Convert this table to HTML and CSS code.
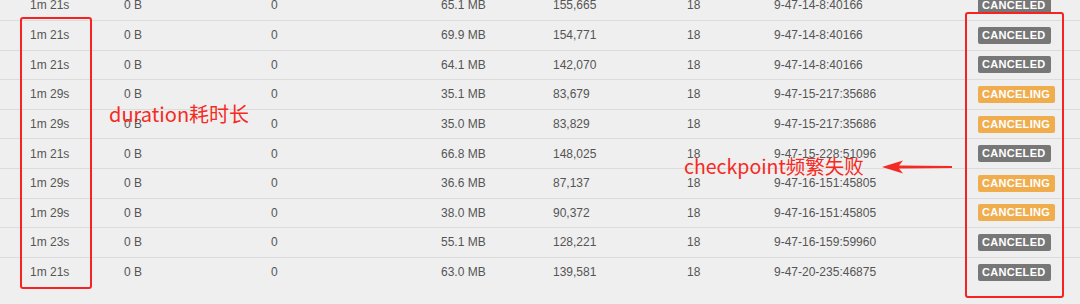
FILE: index.html
```html
<!DOCTYPE html>
<html>
<head>
<meta charset="utf-8">
<link rel="stylesheet" href="styles.css">
</head>
<body>
<div class="page">
  <div class="table">
    <div class="row first"><span>1m 21s</span><span>0 B</span><span>0</span><span>65.1 MB</span><span>155,665</span><span>18</span><span>9-47-14-8:40166</span><span><b class="badge done">CANCELED</b></span></div>
    <div class="row"><span>1m 21s</span><span>0 B</span><span>0</span><span>69.9 MB</span><span>154,771</span><span>18</span><span>9-47-14-8:40166</span><span><b class="badge done">CANCELED</b></span></div>
    <div class="row"><span>1m 21s</span><span>0 B</span><span>0</span><span>64.1 MB</span><span>142,070</span><span>18</span><span>9-47-14-8:40166</span><span><b class="badge done">CANCELED</b></span></div>
    <div class="row"><span>1m 29s</span><span>0 B</span><span>0</span><span>35.1 MB</span><span>83,679</span><span>18</span><span>9-47-15-217:35686</span><span><b class="badge busy">CANCELING</b></span></div>
    <div class="row"><span>1m 29s</span><span>0 B</span><span>0</span><span>35.0 MB</span><span>83,829</span><span>18</span><span>9-47-15-217:35686</span><span><b class="badge busy">CANCELING</b></span></div>
    <div class="row"><span>1m 21s</span><span>0 B</span><span>0</span><span>66.8 MB</span><span>148,025</span><span>18</span><span>9-47-15-228:51096</span><span><b class="badge done">CANCELED</b></span></div>
    <div class="row"><span>1m 29s</span><span>0 B</span><span>0</span><span>36.6 MB</span><span>87,137</span><span>18</span><span>9-47-16-151:45805</span><span><b class="badge busy">CANCELING</b></span></div>
    <div class="row"><span>1m 29s</span><span>0 B</span><span>0</span><span>38.0 MB</span><span>90,372</span><span>18</span><span>9-47-16-151:45805</span><span><b class="badge busy">CANCELING</b></span></div>
    <div class="row"><span>1m 23s</span><span>0 B</span><span>0</span><span>55.1 MB</span><span>128,221</span><span>18</span><span>9-47-16-159:59960</span><span><b class="badge done">CANCELED</b></span></div>
    <div class="row"><span>1m 21s</span><span>0 B</span><span>0</span><span>63.0 MB</span><span>139,581</span><span>18</span><span>9-47-20-235:46875</span><span><b class="badge done">CANCELED</b></span></div>
  </div>

  <div class="box box-left"></div>
  <div class="box box-right"></div>
  <div class="note note-duration">duration耗时长</div>
  <div class="note note-checkpoint">checkpoint频繁失败</div>
  <svg class="arrow" width="72" height="14" viewBox="0 0 72 14">
    <polygon points="0,7 21,0.5 17,5.5 70,6 70,8 17,8.5 21,13.5" fill="#f42a24"/>
  </svg>
</div>
</body>
</html>
```

FILE: styles.css
```css
html, body {
  margin: 0;
  padding: 0;
  background: #efefef;
}

.page {
  position: relative;
  width: 1080px;
  height: 304px;
  overflow: hidden;
  background: #efefef;
}

.table {
  margin-top: -9.6px;
  font-family: "Liberation Sans", Arial, sans-serif;
  font-size: 12px;
  color: #555;
}

.row {
  display: grid;
  grid-template-columns: 94px 147px 170px 112px 134px 87px 204px 1fr;
  align-items: center;
  height: 29.6px;
  box-sizing: border-box;
  padding-left: 30px;
  border-top: 1px solid #dcdcdc;
}

.row.first {
  border-top: none;
}

.badge {
  display: inline-block;
  font-weight: bold;
  font-size: 11px;
  line-height: 13px;
  color: #fff;
  padding: 2px 5px 2px 4px;
  border-radius: 2px;
  letter-spacing: 0.3px;
}

.badge.done {
  background: #777;
}

.badge.busy {
  background: #f0ad4e;
}

.box {
  position: absolute;
  border: 2px solid #f62323;
  border-radius: 3px;
  box-sizing: border-box;
}

.box-left {
  left: 20px;
  top: 17px;
  width: 72px;
  height: 272px;
}

.box-right {
  left: 965px;
  top: 12px;
  width: 99px;
  height: 286px;
}

.note {
  position: absolute;
  font-family: "Noto Sans CJK SC", sans-serif;
  line-height: 22px;
  color: #f52a23;
  white-space: nowrap;
}

.note-duration {
  font-size: 20px;
  left: 109px;
  top: 103px;
}

.note-checkpoint {
  font-size: 19.5px;
  left: 684px;
  top: 155px;
}

.arrow {
  position: absolute;
  left: 882px;
  top: 160px;
}
```
